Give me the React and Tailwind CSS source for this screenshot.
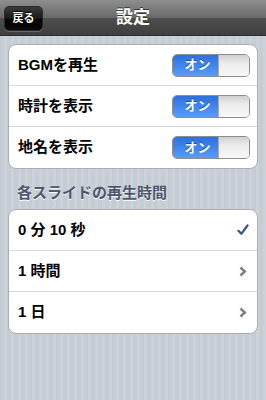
import React from "react";

const font = { fontFamily: '"Liberation Sans", "Noto Sans CJK JP", sans-serif' };

function Toggle() {
  return (
    <div className="flex h-[23px] w-[78px] overflow-hidden rounded-[5px] border border-[#8a8f96]">
      <div className="flex w-[45px] items-center justify-center bg-[linear-gradient(#2f6fd9,#3f86ee_50%,#5b9cf5)] text-[13px] font-bold text-white">
        <span className="ml-[4px] [text-shadow:0_-1px_0_#1d4fa0]">オン</span>
      </div>
      <div className="flex-1 border-l border-[#a8acb2] bg-[linear-gradient(#cfcfcf,#ececec_40%,#f8f8f8)]" />
    </div>
  );
}

function Row({ label, right, last, bold = true }) {
  return (
    <div
      className={`flex h-[41px] items-center justify-between pl-[9px] pr-[7px] ${
        last ? "" : "border-b border-[#d9d9d9]"
      }`}
    >
      <span className={`text-[15px] ${bold ? "font-bold" : ""} text-black`}>{label}</span>
      {right}
    </div>
  );
}

function Check() {
  return (
    <svg width="12" height="12" viewBox="0 0 12 12" className="mr-[1px]">
      <path d="M1.5 6.8 L4.3 9.8 L10.5 1.5" fill="none" stroke="#385487" strokeWidth="2.2" strokeLinecap="round" strokeLinejoin="round" />
    </svg>
  );
}

function Chevron() {
  return (
    <svg width="8" height="11" viewBox="0 0 8 11" className="mr-[3px]">
      <path d="M1.5 1.5 L5.8 5.5 L1.5 9.5" fill="none" stroke="#7f7f7f" strokeWidth="2.4" />
    </svg>
  );
}

export default function App() {
  return (
    <div
      style={font}
      className="flex h-[400px] w-[266px] flex-col bg-[repeating-linear-gradient(90deg,#c5ccd4_0px,#c5ccd4_4px,#cbd2d8_4px,#cbd2d8_7px)]"
    >
      <div className="relative flex h-[36px] items-center justify-center border-b border-[#2d2d2d] bg-[linear-gradient(#8e8e8e,#6a6a6a_50%,#4e4e4e_52%,#3f3f3f)]">
        <div className="absolute left-[4px] top-[6px] flex h-[25px] w-[39px] items-center justify-center rounded-[5px] border border-[#2a2a2a] bg-[linear-gradient(#3a3a3a,#1a1a1a_50%,#000_52%,#0a0a0a)] shadow-[0_1px_0_rgba(255,255,255,0.2)]">
          <span className="text-[11px] font-bold text-white [text-shadow:0_-1px_0_#000]">戻る</span>
        </div>
        <span className="text-[17px] font-bold text-white [text-shadow:0_-1px_0_#333]">設定</span>
      </div>

      <div className="mx-[8px] mt-[8px] overflow-hidden rounded-[8px] border border-[#a9aeb4] bg-white">
        <Row label="BGMを再生" right={<Toggle />} />
        <Row label="時計を表示" right={<Toggle />} />
        <Row label="地名を表示" right={<Toggle />} last />
      </div>

      <div className="ml-[17px] mt-[13px] h-[27px] text-[15px] font-bold text-[#4c566c] [text-shadow:0_1px_0_#fff]">
        各スライドの再生時間
      </div>

      <div className="mx-[8px] overflow-hidden rounded-[8px] border border-[#a9aeb4] bg-white">
        <Row label="0 分 10 秒" right={<Check />} />
        <Row label="1 時間" right={<Chevron />} />
        <Row label="1 日" right={<Chevron />} last />
      </div>
    </div>
  );
}
